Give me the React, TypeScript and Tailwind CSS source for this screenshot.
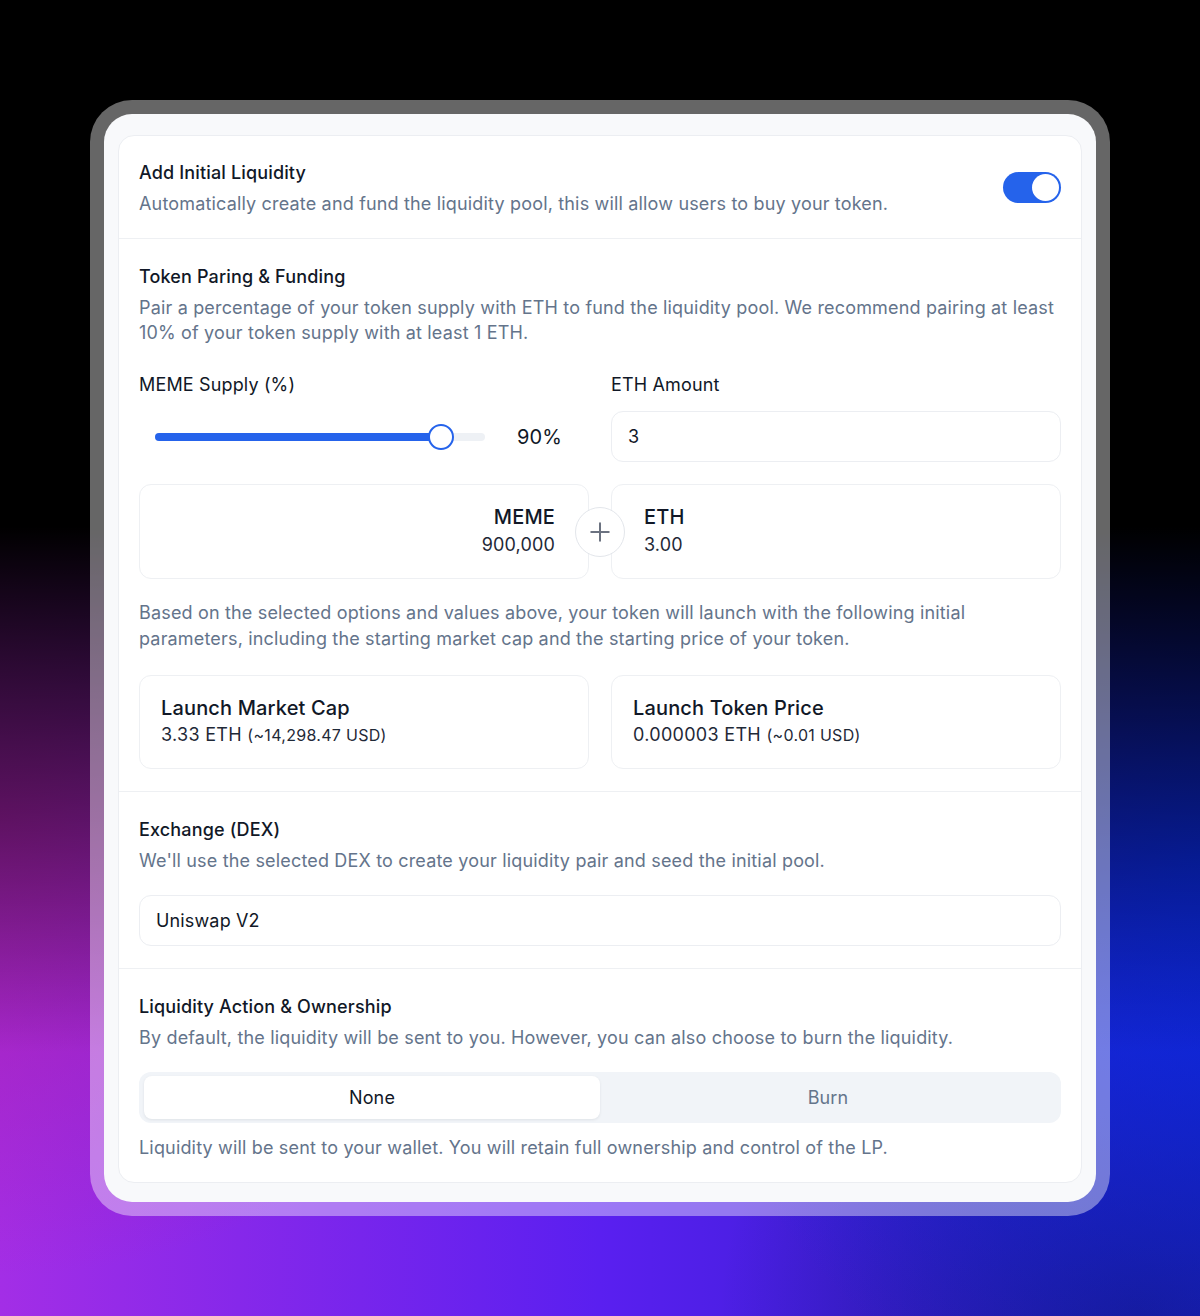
import { Plus } from "lucide-react";

const font = "font-['Inter','Noto_Sans',sans-serif] tracking-[0.15px]";

function SectionHead({ title, desc }: { title: string; desc: string }) {
  return (
    <div>
      <h3 className="text-[18px] font-medium leading-[28px] text-[#111827]">{title}</h3>
      <p className="mt-1 text-[18px] leading-[25px] tracking-[0.17px] text-[#64748b]">{desc}</p>
    </div>
  );
}

export default function App() {
  return (
    <div
      className={`${font} min-h-[1316px] w-full bg-black bg-[linear-gradient(to_bottom,#000_0%,#000_40%,rgba(0,0,0,0)_80%),radial-gradient(ellipse_45%_35%_at_0%_62%,rgba(170,30,170,0.9)_0%,rgba(170,30,170,0)_100%),radial-gradient(ellipse_45%_45%_at_100%_65%,#0a2ae6_0%,rgba(10,42,230,0)_100%),radial-gradient(ellipse_35%_30%_at_95%_100%,rgba(20,20,120,0.7)_0%,rgba(20,20,120,0)_100%),linear-gradient(to_right,#a32ee6_0%,#5a1ff0_50%,#1f1fc0_100%)] px-[90px] py-[100px]`}
    >
      {/* frame */}
      <div className="mx-auto w-[1020px] rounded-[42px] bg-white/40 p-[14px]">
        <div className="rounded-[28px] bg-[#f8f9fb] px-[14px] pb-[19px] pt-[21px]">
          <div className="rounded-2xl border border-[#eceef2] bg-white">
            {/* add initial liquidity */}
            <div className="flex items-center justify-between px-5 pb-[22px] pt-[23px]">
              <SectionHead
                title="Add Initial Liquidity"
                desc="Automatically create and fund the liquidity pool, this will allow users to buy your token."
              />
              <div className="flex h-[31px] w-[58px] items-center justify-end rounded-full bg-[#2563eb] p-[2px]">
                <div className="h-[27px] w-[27px] rounded-full bg-white" />
              </div>
            </div>

            {/* token pairing */}
            <div className="border-t border-[#eef0f3] px-5 pb-[22px] pt-6">
              <SectionHead
                title="Token Paring & Funding"
                desc="Pair a percentage of your token supply with ETH to fund the liquidity pool. We recommend pairing at least 10% of your token supply with at least 1 ETH."
              />

              <div className="mt-[26px] grid grid-cols-2 gap-x-[22px] gap-y-3">
                <div className="text-[18px] leading-[28px] text-[#111827]">MEME Supply (%)</div>
                <div className="text-[18px] leading-[28px] text-[#111827]">ETH Amount</div>

                <div className="flex h-[51px] items-center pl-4">
                  <div className="relative h-2 w-[330px] rounded-full bg-[#eef1f5]">
                    <div className="h-2 w-[286px] rounded-full bg-[#2563eb]" />
                    <div className="absolute left-[273px] top-[-9px] h-[26px] w-[26px] rounded-full border-2 border-[#2563eb] bg-white" />
                  </div>
                  <span className="ml-8 text-[20px] text-[#111827]">90%</span>
                </div>
                <div className="flex h-[51px] items-center rounded-xl border border-[#eceef2] px-4 text-[18px] text-[#111827]">
                  3
                </div>
              </div>

              <div className="relative mt-[22px] grid grid-cols-2 gap-[22px]">
                <div className="flex h-[95px] flex-col items-end justify-center rounded-xl border border-[#eef0f3] pb-[2px] pr-[33px]">
                  <span className="text-[20px] font-medium leading-[26px] text-[#111827]">MEME</span>
                  <span className="mt-[2px] text-[18px] leading-[26px] text-[#1f2937]">900,000</span>
                </div>
                <div className="flex h-[95px] flex-col items-start justify-center rounded-xl border border-[#eef0f3] pb-[2px] pl-[32px]">
                  <span className="text-[20px] font-medium leading-[26px] text-[#111827]">ETH</span>
                  <span className="mt-[2px] text-[18px] leading-[26px] text-[#1f2937]">3.00</span>
                </div>
                <div className="absolute left-1/2 top-1/2 flex h-[50px] w-[50px] -translate-x-1/2 -translate-y-1/2 items-center justify-center rounded-full border border-[#e3e6eb] bg-white">
                  <Plus size={30} strokeWidth={1.6} className="text-[#6b7280]" />
                </div>
              </div>

              <p className="mt-[21px] text-[18px] leading-[26px] tracking-[0.17px] text-[#64748b]">
                Based on the selected options and values above, your token will launch with the following initial
                parameters, including the starting market cap and the starting price of your token.
              </p>

              <div className="mt-[23px] grid grid-cols-2 gap-[22px]">
                <div className="flex h-[94px] flex-col justify-center rounded-xl border border-[#eef0f3] px-[21px] pb-[3px]">
                  <span className="text-[20px] font-medium leading-[28px] text-[#111827]">Launch Market Cap</span>
                  <span className="text-[18px] leading-[26px] tracking-[0.3px] text-[#1f2937]">
                    3.33 ETH <span className="text-[16px]">(~14,298.47 USD)</span>
                  </span>
                </div>
                <div className="flex h-[94px] flex-col justify-center rounded-xl border border-[#eef0f3] px-[21px] pb-[3px]">
                  <span className="text-[20px] font-medium leading-[28px] text-[#111827]">Launch Token Price</span>
                  <span className="text-[18px] leading-[26px] tracking-[0.3px] text-[#1f2937]">
                    0.000003 ETH <span className="text-[16px]">(~0.01 USD)</span>
                  </span>
                </div>
              </div>
            </div>

            {/* exchange */}
            <div className="border-t border-[#eef0f3] px-5 pb-[22px] pt-6">
              <SectionHead
                title="Exchange (DEX)"
                desc="We'll use the selected DEX to create your liquidity pair and seed the initial pool."
              />
              <div className="mt-[22px] flex h-[51px] items-center rounded-xl border border-[#eceef2] px-4 text-[18px] text-[#111827]">
                Uniswap V2
              </div>
            </div>

            {/* liquidity action */}
            <div className="border-t border-[#eef0f3] px-5 pb-[22px] pt-6">
              <SectionHead
                title="Liquidity Action & Ownership"
                desc="By default, the liquidity will be sent to you. However, you can also choose to burn the liquidity."
              />
              <div className="mt-[22px] grid h-[51px] grid-cols-2 rounded-xl bg-[#f1f4f8] px-[5px] py-1">
                <button className="rounded-lg bg-white text-[18px] text-[#111827] shadow-[0_1px_3px_rgba(15,23,42,0.08)]">
                  None
                </button>
                <button className="text-[18px] text-[#64748b]">Burn</button>
              </div>
              <p className="mt-3 text-[18px] leading-[25px] tracking-[0.17px] text-[#64748b]">
                Liquidity will be sent to your wallet. You will retain full ownership and control of the LP.
              </p>
            </div>
          </div>
        </div>
      </div>
    </div>
  );
}
